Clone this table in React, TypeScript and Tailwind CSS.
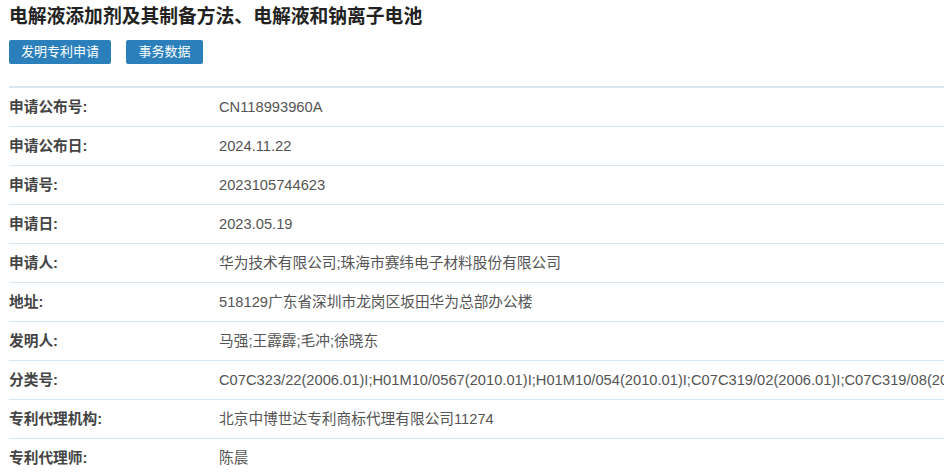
const rows: [string, string][] = [
  ["申请公布号:", "CN118993960A"],
  ["申请公布日:", "2024.11.22"],
  ["申请号:", "2023105744623"],
  ["申请日:", "2023.05.19"],
  ["申请人:", "华为技术有限公司;珠海市赛纬电子材料股份有限公司"],
  ["地址:", "518129广东省深圳市龙岗区坂田华为总部办公楼"],
  ["发明人:", "马强;王霹霹;毛冲;徐晓东"],
  [
    "分类号:",
    "C07C323/22(2006.01)I;H01M10/0567(2010.01)I;H01M10/054(2010.01)I;C07C319/02(2006.01)I;C07C319/08(2006.01)I",
  ],
  ["专利代理机构:", "北京中博世达专利商标代理有限公司11274"],
  ["专利代理师:", "陈晨"],
];

export default function App() {
  return (
    <div
      className="w-[947px] h-[474px] overflow-hidden bg-white pl-[9px]"
      style={{ fontFamily: '"Liberation Sans", Arial, "Noto Sans CJK SC", sans-serif' }}
    >
      <h1 className="pt-[4px] h-[40px] text-[18.8px] font-bold leading-[25px] text-[#222]">
        电解液添加剂及其制备方法、电解液和钠离子电池
      </h1>
      <div className="flex gap-[15px]">
        <button className="h-[24px] w-[102px] rounded-[2px] bg-[#2b7fba] text-[13px] leading-[24px] text-white">
          发明专利申请
        </button>
        <button className="h-[24px] w-[77px] rounded-[2px] bg-[#2b7fba] text-[13px] leading-[24px] text-white">
          事务数据
        </button>
      </div>
      <div className="mt-[22px] w-[935px] overflow-hidden border-t-2 border-[#dae7f1]">
        {rows.map(([label, value]) => (
          <div
            key={label}
            className="flex h-[39px] items-center border-b border-[#d8e7f2] text-[14.7px] whitespace-nowrap"
          >
            <div className="w-[210px] shrink-0 font-bold text-[#444]">{label}</div>
            <div className="text-[#555]">{value}</div>
          </div>
        ))}
      </div>
    </div>
  );
}
